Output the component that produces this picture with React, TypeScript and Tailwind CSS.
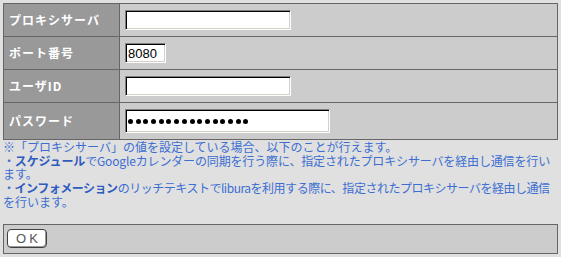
import React from "react";

const font = { fontFamily: '"Noto Sans CJK JP", "Noto Sans", sans-serif' };

function Field({ w, h, children }: { w: string; h: string; children?: React.ReactNode }) {
  return (
    <div
      className={`${w} ${h} bg-white border border-t-[#808080] border-l-[#808080] border-b-[#ffffff] border-r-[#ffffff] shadow-[inset_1px_1px_0_#000000,inset_-1px_-1px_0_#d4d0c8] flex items-center`}
    >
      {children}
    </div>
  );
}

export default function App() {
  const dots = Array.from({ length: 16 });
  return (
    <div className="w-[561px] h-[257px] bg-[#e0e0e0] p-[3px]" style={font}>
      <div className="w-[555px] border border-[#666666]">
        <div className="flex h-[33px] border-b border-[#666666]">
          <div className="w-[116px] bg-[#999999] border-r border-[#666666] flex items-center pl-[5px] text-white font-bold text-[12px] tracking-[1px] leading-none">
            プロキシサーバ
          </div>
          <div className="flex-1 bg-[#cccccc] flex items-center pl-[5px]">
            <Field w="w-[166px]" h="h-[20px]" />
          </div>
        </div>
        <div className="flex h-[33px] border-b border-[#666666]">
          <div className="w-[116px] bg-[#999999] border-r border-[#666666] flex items-center pl-[5px] text-white font-bold text-[12px] tracking-[1px] leading-none">
            ポート番号
          </div>
          <div className="flex-1 bg-[#cccccc] flex items-center pl-[5px]">
            <Field w="w-[41px]" h="h-[20px]">
              <span
                className="pl-[2px] text-[13px] leading-none text-black"
                style={{ fontFamily: '"Liberation Sans", Arial, sans-serif' }}
              >
                8080
              </span>
            </Field>
          </div>
        </div>
        <div className="flex h-[33px] border-b border-[#666666]">
          <div className="w-[116px] bg-[#999999] border-r border-[#666666] flex items-center pl-[5px] text-white font-bold text-[12px] tracking-[1px] leading-none">
            ユーザID
          </div>
          <div className="flex-1 bg-[#cccccc] flex items-center pl-[5px]">
            <Field w="w-[166px]" h="h-[20px]" />
          </div>
        </div>
        <div className="flex h-[36px]">
          <div className="w-[116px] bg-[#999999] border-r border-[#666666] flex items-center pl-[5px] text-white font-bold text-[12px] tracking-[1px] leading-none">
            パスワード
          </div>
          <div className="flex-1 bg-[#cccccc] flex items-center pl-[5px]">
            <Field w="w-[205px]" h="h-[24px]">
              <div className="flex gap-[2.7px] pl-[2px]">
                {dots.map((_, i) => (
                  <span key={i} className="block w-[5px] h-[5px] rounded-full bg-black" />
                ))}
              </div>
            </Field>
          </div>
        </div>
      </div>

      <div className="text-[12px] text-[#3c6ed2] whitespace-nowrap">
        <div className="h-[13px] leading-[13px]">
          ※「プロキシサーバ」の値を設定している場合、以下のことが行えます。
        </div>
        <div className="h-[15px] leading-[15px] tracking-[-0.15px]">
          ・<b className="text-[#2f5cc0]">スケジュール</b>でGoogleカレンダーの同期を行う際に、指定されたプロキシサーバを経由し通信を行い
        </div>
        <div className="h-[12px] leading-[12px]">ます。</div>
        <div className="h-[16px] leading-[16px] tracking-[-0.48px]">
          ・<b className="text-[#2f5cc0]">インフォメーション</b>のリッチテキストでliburaを利用する際に、指定されたプロキシサーバを経由し通信
        </div>
        <div className="h-[12px] leading-[12px]">を行います。</div>
      </div>

      <div className="mt-[16px] w-[555px] h-[30px] border border-[#666666] bg-[#cccccc] pl-[3px] pt-[4px]">
        <button
          className="w-[40px] h-[19px] rounded-[4px] border border-[#404040] bg-white shadow-[inset_-1px_-1px_0_#9a9a9a] flex items-center justify-center text-[13px] leading-none text-[#555555] tracking-[3px] pl-[3px]"
          style={{ fontFamily: '"Liberation Sans", Arial, sans-serif' }}
        >
          OK
        </button>
      </div>
    </div>
  );
}
